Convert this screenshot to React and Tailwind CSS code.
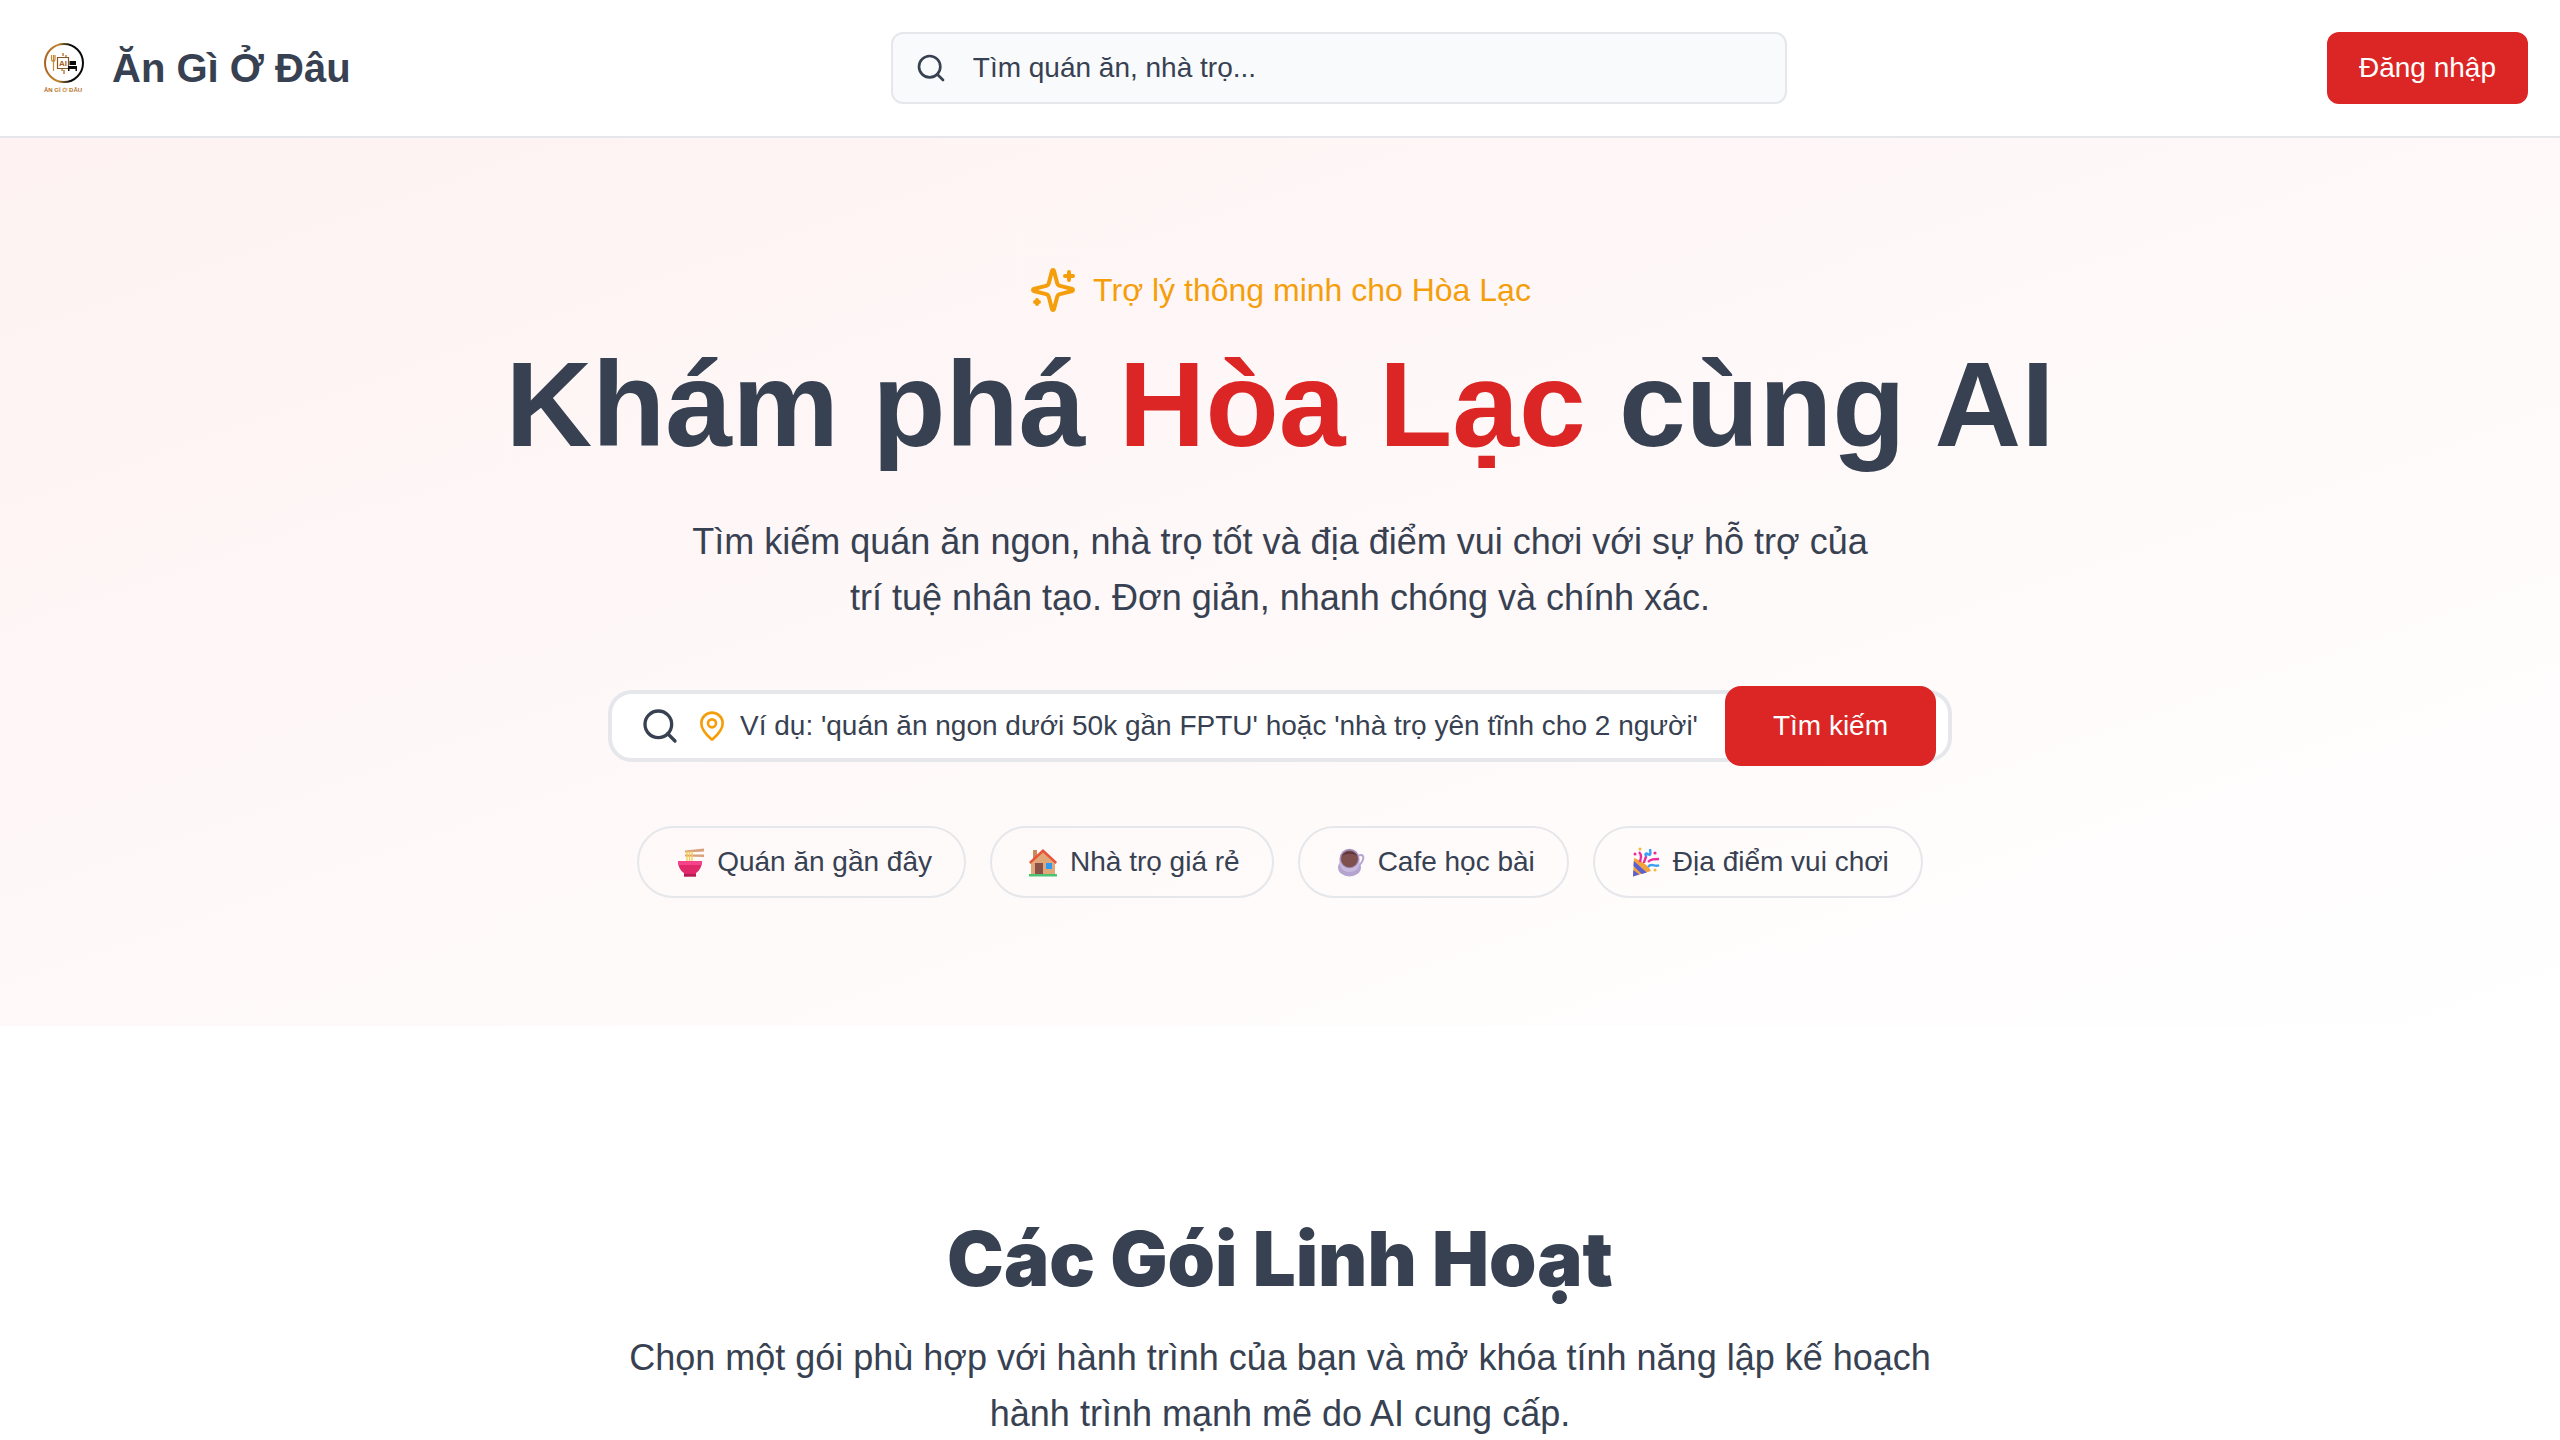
import { Search, MapPin } from "lucide-react";

function Logo() {
  return (
    <svg width="64" height="64" viewBox="0 0 64 64" fill="none" aria-hidden="true">
      <defs>
        <linearGradient id="ring" x1="12" y1="0" x2="52" y2="0" gradientUnits="userSpaceOnUse">
          <stop offset="0" stopColor="#a8601c" />
          <stop offset="0.35" stopColor="#c58a35" />
          <stop offset="0.65" stopColor="#0a0a0a" />
          <stop offset="1" stopColor="#0a0a0a" />
        </linearGradient>
        <linearGradient id="gold" x1="12" y1="0" x2="52" y2="0" gradientUnits="userSpaceOnUse">
          <stop offset="0" stopColor="#a8601c" />
          <stop offset="0.5" stopColor="#c98d3c" />
          <stop offset="1" stopColor="#a8601c" />
        </linearGradient>
      </defs>
      <circle cx="32" cy="27" r="19" stroke="url(#ring)" strokeWidth="2" />
      <path d="M19.500 19v4c0 3 3.500 3 3.500 0v-4M21.500 19v16" stroke="#c58a35" strokeWidth="1.200" />
      <path d="M25.500 21.500h11v11h-11z" stroke="#8a5520" strokeWidth="1.200" />
      <path d="M31 17v3M34 19v2M30 33v2M32 34v4" stroke="#a8601c" strokeWidth="1.200" />
      <text x="27" y="30" fontSize="8" fontWeight="700" fontFamily="Liberation Sans, sans-serif" fill="#a8601c">AI</text>
      <path d="M37.500 25h6.500v4h-6.500zM36 30h9v5h-1.500v-2h-6v2H36z" fill="#0a0a0a" />
      <text x="12" y="56" fontSize="6" fontWeight="700" fontFamily="Liberation Sans, sans-serif" fill="url(#gold)">ĂN GÌ Ở ĐÂU</text>
    </svg>
  );
}

function Sparkles() {
  return (
    <svg
      width="48"
      height="48"
      viewBox="0 0 24 24"
      fill="none"
      stroke="currentColor"
      strokeWidth="2"
      strokeLinecap="round"
      strokeLinejoin="round"
      aria-hidden="true"
    >
      <path d="M9.937 15.5A2 2 0 0 0 8.5 14.063l-6.135-1.582a.5.5 0 0 1 0-.962L8.5 9.936A2 2 0 0 0 9.937 8.5l1.582-6.135a.5.5 0 0 1 .963 0L14.063 8.5A2 2 0 0 0 15.5 9.937l6.135 1.581a.5.5 0 0 1 0 .964L15.5 14.063a2 2 0 0 0-1.437 1.437l-1.582 6.135a.5.5 0 0 1-.963 0z" />
      <path d="M20 3v4M22 5h-4M4 17v2M5 18H3" />
    </svg>
  );
}

function Bowl() {
  return (
    <svg width="38" height="32" viewBox="0 0 38 32" aria-hidden="true">
      <path d="M14 4.500l19-2v3l-19 1zM14 8.500h19v2.500l-19-.500z" fill="#d9a07c" />
      <path d="M16 5v12M18.500 5v12M21 5v12" stroke="#f3c94f" strokeWidth="1.300" />
      <path d="M7 15h24c0 6-3 10-6 12v3.500H13V27c-3-2-6-6-6-12z" fill="#e0286b" />
      <path d="M7 15h24l-.500 4h-23z" fill="#f5428a" />
      <path d="M13 28h12v2.500H13z" fill="#b31c56" />
    </svg>
  );
}

function House() {
  return (
    <svg width="38" height="32" viewBox="0 0 38 32" aria-hidden="true">
      <path d="M9 4h4v8H9z" fill="#c98a5e" />
      <path d="M7 15L19 5l12 10v14H7z" fill="#e0a878" />
      <path d="M19 3L5 16l1.500 2L19 6.500 31.500 18l1.500-2z" fill="#e8543a" />
      <path d="M11 17h8v11h-8z" fill="#8a5148" />
      <path d="M22 17h6v6h-6z" fill="#2f9bf0" />
      <path d="M5 28h28v2.500H5z" fill="#4cc274" />
    </svg>
  );
}

function Cup() {
  return (
    <svg width="38" height="32" viewBox="0 0 38 32" aria-hidden="true">
      <path d="M27 9.500c4-1.500 5 1 4 4-1 3-2 5-5 6" fill="none" stroke="#b7a3d3" strokeWidth="2" />
      <ellipse cx="17.500" cy="21.500" rx="11.500" ry="9" fill="#b5a3d0" />
      <path d="M7.500 12h20c1 7-2 14-10 14s-11-7-10-14z" fill="#c9badf" />
      <circle cx="17.500" cy="12.500" r="9.800" fill="#a794c2" />
      <circle cx="17.500" cy="13" r="8.500" fill="#80504f" />
      <path d="M9.500 10c3-6 13-6 16 0-5-3-11-3-16 0z" fill="#5f373d" />
    </svg>
  );
}

function Party() {
  return (
    <svg width="38" height="32" viewBox="0 0 38 32" aria-hidden="true">
      <path d="M6 30.500L7 12c6 2 14 7 17 13z" fill="#f2a33a" />
      <path d="M6.800 15l13 11.500-5 1.500L6.500 20zM6.300 24l6 4.500-6.300 2z" fill="#5b5fd6" />
      <path d="M12 6c3 3 2 6 1 10M17 17c0-3 3-5 2-9" stroke="#ee2a9c" strokeWidth="2.400" fill="none" />
      <path d="M20 10c-3-1-1-4 1-2s3 1 2-5M21 21c4-5 7 1 11-2" stroke="#3aa0f3" strokeWidth="2.400" fill="none" />
      <path d="M21 16c3-3 6-3 11-3" stroke="#ee2a9c" strokeWidth="2.400" fill="none" />
      <circle cx="13" cy="3" r="1.500" fill="#f5b83d" />
      <circle cx="28" cy="7" r="1.600" fill="#ee2a9c" />
      <circle cx="28" cy="24" r="1.500" fill="#f5b83d" />
      <circle cx="8" cy="8" r="1.500" fill="#ee2a9c" />
    </svg>
  );
}

const suggestions = [
  { label: "Quán ăn gần đây", Icon: Bowl },
  { label: "Nhà trọ giá rẻ", Icon: House },
  { label: "Cafe học bài", Icon: Cup },
  { label: "Địa điểm vui chơi", Icon: Party },
];

export default function App() {
  return (
    <div className="min-h-screen bg-white font-['Liberation_Sans',sans-serif] text-[#374151]">
      <header className="flex items-center justify-between border-b-2 border-gray-200 bg-white px-8 py-8">
        <a href="#" className="flex items-center gap-4">
          <Logo />
          <span className="text-[40px] leading-[56px] font-bold">Ăn Gì Ở Đâu</span>
        </a>
        <label className="flex h-18 w-full max-w-4xl items-center rounded-xl border-2 border-gray-200 bg-gray-50 px-[22px]">
          <Search size={32} className="shrink-0" />
          <input
            type="text"
            aria-label="Tìm quán ăn, nhà trọ"
            placeholder="Tìm quán ăn, nhà trọ..."
            className="ml-[26px] w-full bg-transparent text-[28px] leading-10 outline-none placeholder:text-[#374151]"
          />
        </label>
        <button className="h-18 rounded-xl bg-[#dc2626] px-8 text-[28px] leading-10 text-white">Đăng nhập</button>
      </header>

      <main>
        <section className="flex flex-col items-center bg-linear-to-br from-[#fef2f2] to-white px-8 py-32">
          <p className="flex items-center gap-4 text-[32px] leading-11 text-[#f59e0b]">
            <Sparkles />
            Trợ lý thông minh cho Hòa Lạc
          </p>
          <h1 className="mt-[30px] text-center text-[120px] leading-[120px] font-bold">
            Khám phá <span className="text-[#dc2626]">Hòa Lạc</span> cùng AI
          </h1>
          <p className="mt-[50px] max-w-[1200px] text-center text-[36px] leading-14">
            Tìm kiếm quán ăn ngon, nhà trọ tốt và địa điểm vui chơi với sự hỗ trợ của trí tuệ nhân tạo. Đơn giản, nhanh
            chóng và chính xác.
          </p>
          <form className="mt-16 flex h-18 w-full max-w-[1344px] items-center rounded-3xl border-4 border-gray-200 bg-white pr-3 pl-7">
            <Search size={40} className="shrink-0" />
            <MapPin size={32} className="ml-4 shrink-0 text-[#f59e0b]" />
            <input
              type="text"
              aria-label="Tìm kiếm bằng AI"
              placeholder="Ví dụ: 'quán ăn ngon dưới 50k gần FPTU' hoặc 'nhà trọ yên tĩnh cho 2 người'"
              className="ml-3 min-w-0 flex-1 bg-transparent text-[28px] leading-10 outline-none placeholder:text-[#374151]"
            />
            <button type="button" className="h-20 rounded-2xl bg-[#dc2626] px-12 text-[28px] leading-10 text-white">
              Tìm kiếm
            </button>
          </form>
          <div className="mt-16 flex flex-wrap justify-center gap-6">
            {suggestions.map(({ label, Icon }) => (
              <button
                key={label}
                className="flex h-18 items-center gap-2 rounded-full border-2 border-gray-200 px-8 text-[28px] leading-10"
              >
                <Icon />
                {label}
              </button>
            ))}
          </div>
        </section>

        <section className="flex flex-col items-center px-8 pt-48">
          <h2 className="text-center font-['Inter',sans-serif] text-[76px] leading-20 font-black">
            Các Gói Linh Hoạt
          </h2>
          <p className="mt-8 max-w-[1344px] text-center text-[36px] leading-14">
            Chọn một gói phù hợp với hành trình của bạn và mở khóa tính năng lập kế hoạch hành trình mạnh mẽ do AI cung
            cấp.
          </p>
        </section>
      </main>
    </div>
  );
}
